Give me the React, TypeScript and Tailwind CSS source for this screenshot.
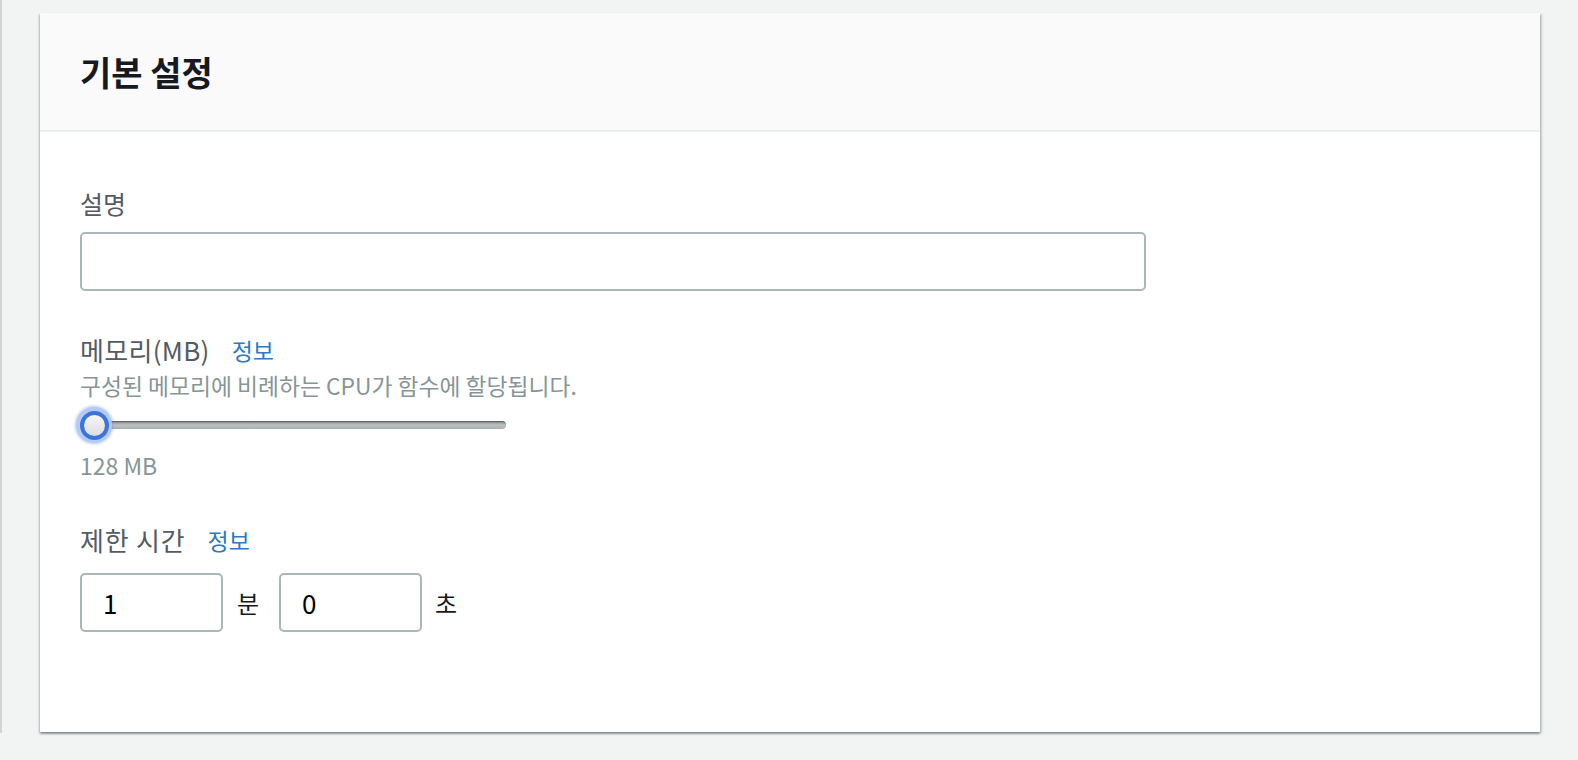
import { useState } from 'react'

const FONT = { fontFamily: '"Noto Sans CJK KR", "Noto Sans", sans-serif' }

function InfoLink() {
  return <span className="text-[#2a7bbf] text-[23px] ml-[22px] tracking-normal">정보</span>
}

function MemorySlider() {
  return (
    <div className="relative w-[426px] h-[36px] flex items-center">
      <div className="w-full h-[8px] rounded-full bg-gradient-to-b from-[#7d8384] via-[#bfc3c4] to-[#a9aeaf] shadow-[inset_0_1px_1px_rgba(0,0,0,0.3)]" />
      <div className="absolute left-[-4px] top-[0px] w-[36px] h-[36px] rounded-full bg-[#b3cbf5] shadow-[0_0_3px_1px_rgba(90,140,230,0.45)] flex items-center justify-center">
        <div className="w-[29px] h-[29px] rounded-full bg-[#3d74dc] flex items-center justify-center">
          <div className="w-[21px] h-[21px] rounded-full bg-gradient-to-b from-[#f6f6f6] to-[#dedede]" />
        </div>
      </div>
    </div>
  )
}

export default function App() {
  const [desc, setDesc] = useState('')
  const [min, setMin] = useState('1')
  const [sec, setSec] = useState('0')

  return (
    <div className="w-[1578px] h-[760px] bg-[#f2f3f3] flex items-start overflow-hidden" style={FONT}>
      <div className="w-[2px] h-[733px] bg-[#cfd5d6]" />
      <div className="ml-[38px] mt-[13px] w-[1500px] h-[719px] bg-white shadow-[0_2px_2px_0_rgba(0,28,36,0.35),2px_1px_2px_0_rgba(0,28,36,0.15),-1px_1px_2px_0_rgba(0,28,36,0.15)]">
        <div className="h-[119px] bg-[#fafafa] border-b-2 border-[#eaeded] flex items-center px-[40px]">
          <h2 className="text-[34px] font-bold text-[#16191f] leading-none">기본 설정</h2>
        </div>

        <div className="px-[40px] flex flex-col items-start">
          <div className="mt-[55px] h-[32px] leading-[32px] text-[25px] text-[#545b64]">설명</div>
          <input
            value={desc}
            onChange={e => setDesc(e.target.value)}
            className="box-border mt-[13px] w-[1066px] h-[59px] border-2 border-[#aab7b8] rounded-[5px] px-[20px] text-[24px] outline-none"
          />

          <div className="mt-[43px] h-[32px] leading-[32px] flex items-center text-[26px] tracking-[0.3px] text-[#545b64]">
            메모리(MB)
            <InfoLink />
          </div>
          <div className="mt-[6px] h-[28px] leading-[28px] text-[22.8px] text-[#879596]">
            구성된 메모리에 비례하는 CPU가 함수에 할당됩니다.
          </div>
          <div className="mt-[7px]">
            <MemorySlider />
          </div>
          <div className="mt-[8px] h-[28px] leading-[28px] text-[23px] text-[#879596]">128 MB</div>

          <div className="mt-[45px] h-[32px] leading-[32px] flex items-center text-[26px] tracking-[0.8px] text-[#545b64]">
            제한 시간
            <InfoLink />
          </div>
          <div className="mt-[17px] flex items-center">
            <input
              value={min}
              onChange={e => setMin(e.target.value)}
              className="box-border w-[143px] h-[59px] border-2 border-[#aab7b8] rounded-[5px] px-[21px] text-[26px] text-black outline-none"
            />
            <span className="ml-[14px] text-[24px] text-[#16191f]">분</span>
            <input
              value={sec}
              onChange={e => setSec(e.target.value)}
              className="box-border ml-[20px] w-[143px] h-[59px] border-2 border-[#aab7b8] rounded-[5px] px-[21px] text-[26px] text-black outline-none"
            />
            <span className="ml-[13px] text-[24px] text-[#16191f]">초</span>
          </div>
        </div>
      </div>
    </div>
  )
}
